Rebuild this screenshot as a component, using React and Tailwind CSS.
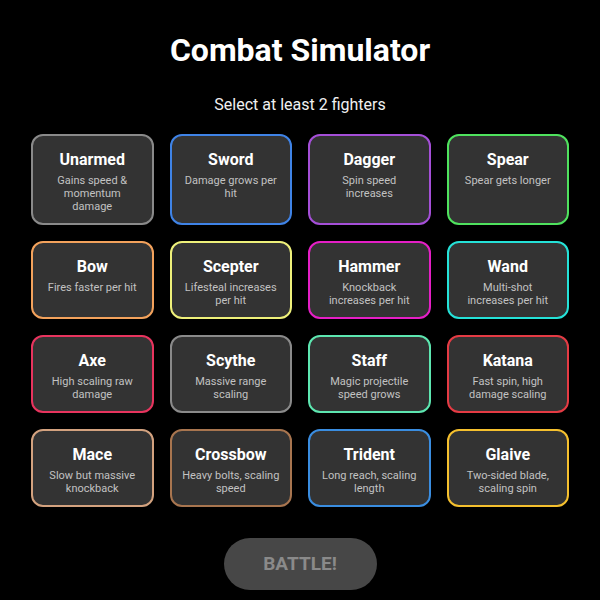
import React from "react";

const fighters = [
  { name: "Unarmed", desc: ["Gains speed &", "momentum", "damage"], border: "border-[#8a8a8a]" },
  { name: "Sword", desc: ["Damage grows per", "hit"], border: "border-[#3f83e6]" },
  { name: "Dagger", desc: ["Spin speed", "increases"], border: "border-[#a54fd8]" },
  { name: "Spear", desc: ["Spear gets longer"], border: "border-[#4fe25e]" },
  { name: "Bow", desc: ["Fires faster per hit"], border: "border-[#f3a25c]" },
  { name: "Scepter", desc: ["Lifesteal increases", "per hit"], border: "border-[#eef07a]" },
  { name: "Hammer", desc: ["Knockback", "increases per hit"], border: "border-[#e51fc6]" },
  { name: "Wand", desc: ["Multi-shot", "increases per hit"], border: "border-[#25e2d8]" },
  { name: "Axe", desc: ["High scaling raw", "damage"], border: "border-[#e8345e]" },
  { name: "Scythe", desc: ["Massive range", "scaling"], border: "border-[#8a8a8a]" },
  { name: "Staff", desc: ["Magic projectile", "speed grows"], border: "border-[#5de6b0]" },
  { name: "Katana", desc: ["Fast spin, high", "damage scaling"], border: "border-[#e53b44]" },
  { name: "Mace", desc: ["Slow but massive", "knockback"], border: "border-[#d3a27f]" },
  { name: "Crossbow", desc: ["Heavy bolts, scaling", "speed"], border: "border-[#a8754f]" },
  { name: "Trident", desc: ["Long reach, scaling", "length"], border: "border-[#3a8de0]" },
  { name: "Glaive", desc: ["Two-sided blade,", "scaling spin"], border: "border-[#f5c02e]" },
];

export default function App() {
  return (
    <div
      className="w-[600px] h-[600px] bg-black text-white flex flex-col items-center overflow-hidden"
      style={{ fontFamily: "Roboto, 'Liberation Sans', sans-serif" }}
    >
      <h1 className="mt-[31px] text-[32px] leading-[38px] font-bold">Combat Simulator</h1>
      <p className="mt-[24px] text-[16px] leading-[24px] text-[#f0f0f0]">Select at least 2 fighters</p>
      <div className="mt-[17px] w-[538px] grid grid-cols-4 gap-x-[16px] gap-y-[16px]">
        {fighters.map((f) => (
          <div
            key={f.name}
            className={`bg-[#333333] border-2 ${f.border} rounded-[12px] px-[8px] pt-[14px] pb-[10px] flex flex-col items-center text-center`}
          >
            <div className="text-[16px] leading-[20px] font-bold text-white">{f.name}</div>
            <div className="mt-[4px] text-[11px] leading-[13px] text-[#c2c2c2]">
              {f.desc.map((line) => (
                <div key={line} className="whitespace-nowrap">
                  {line}
                </div>
              ))}
            </div>
          </div>
        ))}
      </div>
      <button className="mt-[31px] w-[153px] h-[52px] rounded-full bg-[#474747] text-[#8a8a8a] text-[19px] font-bold">
        BATTLE!
      </button>
    </div>
  );
}
